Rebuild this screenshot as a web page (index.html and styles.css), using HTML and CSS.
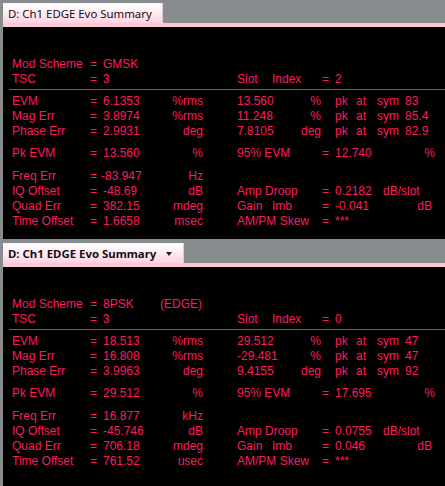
FILE: index.html
```html
<!DOCTYPE html>
<html lang="en">
<head>
    <meta charset="UTF-8">
    <title>EDGE Evo Summary</title>
    <link rel="stylesheet" href="styles.css">
</head>
<body>
    <div class="window">
        <!-- Panel 1: GMSK -->
        <div class="panel panel-top">
            <div class="tab-bar">
                <div class="tab">D: Ch1 EDGE Evo Summary</div>
            </div>
            <div class="tab-strip"></div>
            <div class="summary">
                <div class="row">
                    <div class="left"><span>Mod Scheme</span><span>=</span><span>GMSK</span></div>
                </div>
                <div class="row">
                    <div class="left"><span>TSC</span><span>=</span><span>3</span></div>
                    <div class="right"><span><span class="word">Slot</span>Index</span><span>=</span><span>2</span></div>
                </div>
                <div class="divider"></div>
                <div class="row">
                    <div class="left"><span>EVM</span><span>=</span><span>6.1353</span><span class="unit">%rms</span></div>
                    <div class="right"><span class="pair"><span>13.560</span><span>%</span></span><span class="peak"><span>pk</span><span>at</span><span>sym</span><span>83</span></span></div>
                </div>
                <div class="row">
                    <div class="left"><span>Mag Err</span><span>=</span><span>3.8974</span><span class="unit">%rms</span></div>
                    <div class="right"><span class="pair"><span>11.248</span><span>%</span></span><span class="peak"><span>pk</span><span>at</span><span>sym</span><span>85.4</span></span></div>
                </div>
                <div class="row">
                    <div class="left"><span>Phase Err</span><span>=</span><span>2.9931</span><span class="unit">deg</span></div>
                    <div class="right"><span class="pair"><span>7.8105</span><span>deg</span></span><span class="peak"><span>pk</span><span>at</span><span>sym</span><span>82.9</span></span></div>
                </div>
                <div class="row group">
                    <div class="left"><span>Pk EVM</span><span>=</span><span>13.560</span><span class="unit">%</span></div>
                    <div class="right"><span>95% EVM</span><span>=</span><span class="value-unit wide"><span>12.740</span><span>%</span></span></div>
                </div>
                <div class="row group-wide">
                    <div class="left"><span>Freq Err</span><span>=</span><span class="neg">-83.947</span><span class="unit">Hz</span></div>
                </div>
                <div class="row">
                    <div class="left"><span>IQ Offset</span><span>=</span><span>-48.69</span><span class="unit">dB</span></div>
                    <div class="right"><span>Amp Droop</span><span>=</span><span><span class="droop">0.2182</span>dB/slot</span></div>
                </div>
                <div class="row">
                    <div class="left"><span>Quad Err</span><span>=</span><span>382.15</span><span class="unit">mdeg</span></div>
                    <div class="right"><span><span class="word">Gain</span>Imb</span><span>=</span><span class="value-unit"><span>-0.041</span><span>dB</span></span></div>
                </div>
                <div class="row">
                    <div class="left"><span>Time Offset</span><span>=</span><span>1.6658</span><span class="unit">msec</span></div>
                    <div class="right"><span>AM/PM Skew</span><span>=</span><span>***</span></div>
                </div>
            </div>
        </div>

        <!-- Panel 2: 8PSK -->
        <div class="panel panel-bottom">
            <div class="tab-bar">
                <div class="tab tab-active">D: Ch1 EDGE Evo Summary<span class="caret"></span></div>
            </div>
            <div class="tab-strip"></div>
            <div class="summary">
                <div class="row">
                    <div class="left"><span>Mod Scheme</span><span>=</span><span class="scheme"><span class="word-wide">8PSK</span>(EDGE)</span></div>
                </div>
                <div class="row">
                    <div class="left"><span>TSC</span><span>=</span><span>3</span></div>
                    <div class="right"><span><span class="word">Slot</span>Index</span><span>=</span><span>0</span></div>
                </div>
                <div class="divider"></div>
                <div class="row">
                    <div class="left"><span>EVM</span><span>=</span><span>18.513</span><span class="unit">%rms</span></div>
                    <div class="right"><span class="pair"><span>29.512</span><span>%</span></span><span class="peak"><span>pk</span><span>at</span><span>sym</span><span>47</span></span></div>
                </div>
                <div class="row">
                    <div class="left"><span>Mag Err</span><span>=</span><span>16.808</span><span class="unit">%rms</span></div>
                    <div class="right"><span class="pair"><span>-29.481</span><span>%</span></span><span class="peak"><span>pk</span><span>at</span><span>sym</span><span>47</span></span></div>
                </div>
                <div class="row">
                    <div class="left"><span>Phase Err</span><span>=</span><span>3.9963</span><span class="unit">deg</span></div>
                    <div class="right"><span class="pair"><span>9.4155</span><span>deg</span></span><span class="peak"><span>pk</span><span>at</span><span>sym</span><span>92</span></span></div>
                </div>
                <div class="row group">
                    <div class="left"><span>Pk EVM</span><span>=</span><span>29.512</span><span class="unit">%</span></div>
                    <div class="right"><span>95% EVM</span><span>=</span><span class="value-unit wide"><span>17.695</span><span>%</span></span></div>
                </div>
                <div class="row group-wide">
                    <div class="left"><span>Freq Err</span><span>=</span><span>16.877</span><span class="unit">kHz</span></div>
                </div>
                <div class="row">
                    <div class="left"><span>IQ Offset</span><span>=</span><span>-45.746</span><span class="unit">dB</span></div>
                    <div class="right"><span>Amp Droop</span><span>=</span><span><span class="droop">0.0755</span>dB/slot</span></div>
                </div>
                <div class="row">
                    <div class="left"><span>Quad Err</span><span>=</span><span>706.18</span><span class="unit">mdeg</span></div>
                    <div class="right"><span><span class="word">Gain</span>Imb</span><span>=</span><span class="value-unit"><span>0.046</span><span>dB</span></span></div>
                </div>
                <div class="row">
                    <div class="left"><span>Time Offset</span><span>=</span><span>761.52</span><span class="unit">usec</span></div>
                    <div class="right"><span>AM/PM Skew</span><span>=</span><span>***</span></div>
                </div>
            </div>
        </div>
    </div>
</body>
</html>
```

FILE: styles.css
```css
body {
    margin: 0;
    background-color: #898c8f;
    font-family: "Liberation Sans", Arial, sans-serif;
}
.window {
    width: 445px;
    height: 486px;
    padding-left: 3px;
    box-sizing: border-box;
    overflow: hidden;
}
.tab-bar {
    height: 20px;
    padding-top: 3px;
}
.panel-bottom .tab-bar {
    padding-top: 4px;
}
.tab {
    display: flex;
    align-items: center;
    width: 160px;
    height: 20px;
    box-sizing: border-box;
    padding-left: 5px;
    background: linear-gradient(#ffffff, #ffd3e0);
    border-top: 1px solid #f4f4f4;
    border-right: 1px solid #d2d2d4;
    font-family: "Noto Sans", "Open Sans", sans-serif;
    font-size: 11.4px;
    color: #101018;
    white-space: nowrap;
}
.tab-active {
    width: 181px;
    font-weight: bold;
}
.caret {
    width: 0;
    height: 0;
    margin-left: 10px;
    border-left: 3px solid transparent;
    border-right: 3px solid transparent;
    border-top: 4px solid #202020;
}
.tab-strip {
    height: 4px;
    background-color: #ffc8d9;
}
.summary {
    background-color: #000;
    color: #ff1a5a;
    font-size: 12px;
    line-height: 15px;
    padding: 30px 0 0 6px;
    box-sizing: border-box;
    white-space: nowrap;
}
.panel-top .summary {
    height: 212px;
}
.panel-bottom .summary {
    height: 219px;
}
.row {
    display: flex;
    padding-left: 3px;
}
.left {
    display: grid;
    grid-template-columns: 78px 13px 60px 40px;
    width: 225px;
    flex-shrink: 0;
}
.right {
    display: grid;
    grid-template-columns: 85px 13px auto;
}
.unit {
    text-align: right;
}
.neg {
    margin-left: -2px;
}
.scheme {
    grid-column: span 2;
}
.word-wide {
    display: inline-block;
    width: 57px;
}
.word {
    display: inline-block;
    width: 35px;
}
.pair {
    grid-column: span 2;
    display: flex;
    justify-content: space-between;
    padding-right: 14px;
}
.peak {
    display: grid;
    grid-template-columns: 21px 21px 28px auto;
}
.value-unit {
    display: flex;
    justify-content: space-between;
    width: 97px;
}
.value-unit.wide {
    width: 100px;
}
.droop {
    display: inline-block;
    width: 48px;
}
.divider {
    height: 1px;
    margin: 2px 0 4px;
    background-color: #ff1a5a;
}
.group {
    margin-top: 7px;
}
.group-wide {
    margin-top: 8px;
}
```
